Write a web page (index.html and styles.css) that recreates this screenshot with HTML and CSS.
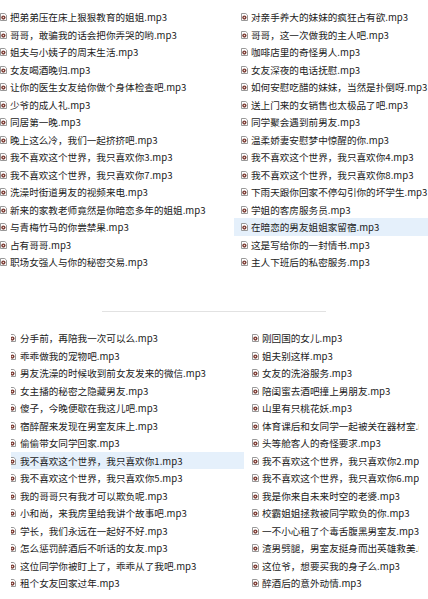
FILE: index.html
```html
<!DOCTYPE html>
<html lang="zh-CN">
<head>
<meta charset="utf-8">
<title>mp3 列表</title>
<link rel="stylesheet" href="styles.css">
</head>
<body>
<svg class="defs" width="0" height="0" aria-hidden="true">
  <symbol id="ic" viewBox="0 0 7 8">
    <path d="M0.5 0.5h4.3l1.7 1.7v5.3h-6z" fill="#fff" stroke="#8c8c8c" stroke-width="0.9"/>
    <circle cx="3.4" cy="4.6" r="2.1" fill="#7a3a32"/>
    <circle cx="3.4" cy="4.6" r="0.75" fill="#f4e6e2"/>
  </symbol>
</svg>

<div class="section top">
  <div class="list left">
    <div class="row"><svg class="icon"><use href="#ic"/></svg><span>把弟弟压在床上狠狠教育的姐姐.mp3</span></div>
    <div class="row"><svg class="icon"><use href="#ic"/></svg><span>哥哥，敢骗我的话会把你弄哭的哟.mp3</span></div>
    <div class="row"><svg class="icon"><use href="#ic"/></svg><span>姐夫与小姨子的周末生活.mp3</span></div>
    <div class="row"><svg class="icon"><use href="#ic"/></svg><span>女友喝酒晚归.mp3</span></div>
    <div class="row"><svg class="icon"><use href="#ic"/></svg><span>让你的医生女友给你做个身体检查吧.mp3</span></div>
    <div class="row"><svg class="icon"><use href="#ic"/></svg><span>少爷的成人礼.mp3</span></div>
    <div class="row"><svg class="icon"><use href="#ic"/></svg><span>同居第一晚.mp3</span></div>
    <div class="row"><svg class="icon"><use href="#ic"/></svg><span>晚上这么冷，我们一起挤挤吧.mp3</span></div>
    <div class="row"><svg class="icon"><use href="#ic"/></svg><span>我不喜欢这个世界，我只喜欢你3.mp3</span></div>
    <div class="row"><svg class="icon"><use href="#ic"/></svg><span>我不喜欢这个世界，我只喜欢你7.mp3</span></div>
    <div class="row"><svg class="icon"><use href="#ic"/></svg><span>洗澡时街道男友的视频来电.mp3</span></div>
    <div class="row"><svg class="icon"><use href="#ic"/></svg><span>新来的家教老师竟然是你暗恋多年的姐姐.mp3</span></div>
    <div class="row"><svg class="icon"><use href="#ic"/></svg><span>与青梅竹马的你尝禁果.mp3</span></div>
    <div class="row"><svg class="icon"><use href="#ic"/></svg><span>占有哥哥.mp3</span></div>
    <div class="row"><svg class="icon"><use href="#ic"/></svg><span>职场女强人与你的秘密交易.mp3</span></div>
  </div>
  <div class="list right">
    <div class="row"><svg class="icon"><use href="#ic"/></svg><span>对亲手养大的妹妹的疯狂占有欲.mp3</span></div>
    <div class="row"><svg class="icon"><use href="#ic"/></svg><span>哥哥，这一次做我的主人吧.mp3</span></div>
    <div class="row"><svg class="icon"><use href="#ic"/></svg><span>咖啡店里的奇怪男人.mp3</span></div>
    <div class="row"><svg class="icon"><use href="#ic"/></svg><span>女友深夜的电话抚慰.mp3</span></div>
    <div class="row"><svg class="icon"><use href="#ic"/></svg><span>如何安慰吃醋的妹妹，当然是扑倒呀.mp3</span></div>
    <div class="row"><svg class="icon"><use href="#ic"/></svg><span>送上门来的女销售也太极品了吧.mp3</span></div>
    <div class="row"><svg class="icon"><use href="#ic"/></svg><span>同学聚会遇到前男友.mp3</span></div>
    <div class="row"><svg class="icon"><use href="#ic"/></svg><span>温柔娇妻安慰梦中惊醒的你.mp3</span></div>
    <div class="row"><svg class="icon"><use href="#ic"/></svg><span>我不喜欢这个世界，我只喜欢你4.mp3</span></div>
    <div class="row"><svg class="icon"><use href="#ic"/></svg><span>我不喜欢这个世界，我只喜欢你8.mp3</span></div>
    <div class="row"><svg class="icon"><use href="#ic"/></svg><span>下雨天跟你回家不停勾引你的坏学生.mp3</span></div>
    <div class="row"><svg class="icon"><use href="#ic"/></svg><span>学姐的客房服务员.mp3</span></div>
    <div class="row sel"><svg class="icon"><use href="#ic"/></svg><span>在暗恋的男友姐姐家留宿.mp3</span></div>
    <div class="row"><svg class="icon"><use href="#ic"/></svg><span>这是写给你的一封情书.mp3</span></div>
    <div class="row"><svg class="icon"><use href="#ic"/></svg><span>主人下班后的私密服务.mp3</span></div>
  </div>
</div>

<div class="divider"></div>

<div class="section bottom">
  <div class="list left">
    <div class="row"><span class="clip"><svg class="icon"><use href="#ic"/></svg></span><span>分手前，再陪我一次可以么.mp3</span></div>
    <div class="row"><span class="clip"><svg class="icon"><use href="#ic"/></svg></span><span>乖乖做我的宠物吧.mp3</span></div>
    <div class="row"><span class="clip"><svg class="icon"><use href="#ic"/></svg></span><span>男友洗澡的时候收到前女友发来的微信.mp3</span></div>
    <div class="row"><span class="clip"><svg class="icon"><use href="#ic"/></svg></span><span>女主播的秘密之隐藏男友.mp3</span></div>
    <div class="row"><span class="clip"><svg class="icon"><use href="#ic"/></svg></span><span>傻子，今晚便歇在我这儿吧.mp3</span></div>
    <div class="row"><span class="clip"><svg class="icon"><use href="#ic"/></svg></span><span>宿醉醒来发现在男室友床上.mp3</span></div>
    <div class="row"><span class="clip"><svg class="icon"><use href="#ic"/></svg></span><span>偷偷带女同学回家.mp3</span></div>
    <div class="row sel"><span class="clip"><svg class="icon"><use href="#ic"/></svg></span><span>我不喜欢这个世界，我只喜欢你1.mp3</span></div>
    <div class="row"><span class="clip"><svg class="icon"><use href="#ic"/></svg></span><span>我不喜欢这个世界，我只喜欢你5.mp3</span></div>
    <div class="row"><span class="clip"><svg class="icon"><use href="#ic"/></svg></span><span>我的哥哥只有我才可以欺负呢.mp3</span></div>
    <div class="row"><span class="clip"><svg class="icon"><use href="#ic"/></svg></span><span>小和尚，来我房里给我讲个故事吧.mp3</span></div>
    <div class="row"><span class="clip"><svg class="icon"><use href="#ic"/></svg></span><span>学长，我们永远在一起好不好.mp3</span></div>
    <div class="row"><span class="clip"><svg class="icon"><use href="#ic"/></svg></span><span>怎么惩罚醉酒后不听话的女友.mp3</span></div>
    <div class="row"><span class="clip"><svg class="icon"><use href="#ic"/></svg></span><span>这位同学你被盯上了，乖乖从了我吧.mp3</span></div>
    <div class="row"><span class="clip"><svg class="icon"><use href="#ic"/></svg></span><span>租个女友回家过年.mp3</span></div>
  </div>
  <div class="list right">
    <div class="row"><svg class="icon"><use href="#ic"/></svg><span>刚回国的女儿.mp3</span></div>
    <div class="row"><svg class="icon"><use href="#ic"/></svg><span>姐夫别这样.mp3</span></div>
    <div class="row"><svg class="icon"><use href="#ic"/></svg><span>女友的洗浴服务.mp3</span></div>
    <div class="row"><svg class="icon"><use href="#ic"/></svg><span>陪闺蜜去酒吧撞上男朋友.mp3</span></div>
    <div class="row"><svg class="icon"><use href="#ic"/></svg><span>山里有只桃花妖.mp3</span></div>
    <div class="row"><svg class="icon"><use href="#ic"/></svg><span>体育课后和女同学一起被关在器材室.mp3</span></div>
    <div class="row"><svg class="icon"><use href="#ic"/></svg><span>头等舱客人的奇怪要求.mp3</span></div>
    <div class="row"><svg class="icon"><use href="#ic"/></svg><span>我不喜欢这个世界，我只喜欢你2.mp3</span></div>
    <div class="row"><svg class="icon"><use href="#ic"/></svg><span>我不喜欢这个世界，我只喜欢你6.mp3</span></div>
    <div class="row"><svg class="icon"><use href="#ic"/></svg><span>我是你来自未来时空的老婆.mp3</span></div>
    <div class="row"><svg class="icon"><use href="#ic"/></svg><span>校霸姐姐拯救被同学欺负的你.mp3</span></div>
    <div class="row"><svg class="icon"><use href="#ic"/></svg><span>一不小心租了个毒舌腹黑男室友.mp3</span></div>
    <div class="row"><svg class="icon"><use href="#ic"/></svg><span>渣男劈腿，男室友挺身而出英雄救美.mp3</span></div>
    <div class="row"><svg class="icon"><use href="#ic"/></svg><span>这位爷，想要买我的身子么.mp3</span></div>
    <div class="row"><svg class="icon"><use href="#ic"/></svg><span>醉酒后的意外动情.mp3</span></div>
  </div>
</div>
</body>
</html>
```

FILE: styles.css
```css
html, body {
  margin: 0;
  padding: 0;
  background: #fff;
}

body {
  width: 428px;
  height: 599px;
  overflow: hidden;
  font-family: "Noto Sans CJK SC", "Noto Sans", sans-serif;
  font-size: 9.6px;
  color: #222;
}

.defs {
  position: absolute;
  width: 0;
  height: 0;
}

.section {
  display: grid;
}

.top {
  padding-top: 8.25px;
  grid-template-columns: 234px 194px;
}

.list {
  display: flex;
  flex-direction: column;
  min-width: 0;
  overflow: hidden;
}

.row {
  height: 17.5px;
  display: flex;
  align-items: center;
  gap: 3px;
  white-space: nowrap;
}

.row.sel {
  background: #e5f0fb;
}

.icon {
  width: 7px;
  height: 8px;
  flex: none;
  display: block;
}

.top .right .row {
  padding-left: 7px;
}

.divider {
  width: 224px;
  height: 1px;
  background: #e2e2e2;
  margin: 40.25px 0 17.25px 102px;
}

.bottom {
  margin-left: 11px;
  width: 408px;
  overflow: hidden;
  grid-template-columns: 233px 175px;
}

.bottom .left .row {
  gap: 4px;
}

.clip {
  width: 5px;
  height: 8px;
  overflow: hidden;
  flex: none;
  display: block;
}

.clip .icon {
  margin-left: -2px;
}

.bottom .right .row {
  padding-left: 8px;
}
```
